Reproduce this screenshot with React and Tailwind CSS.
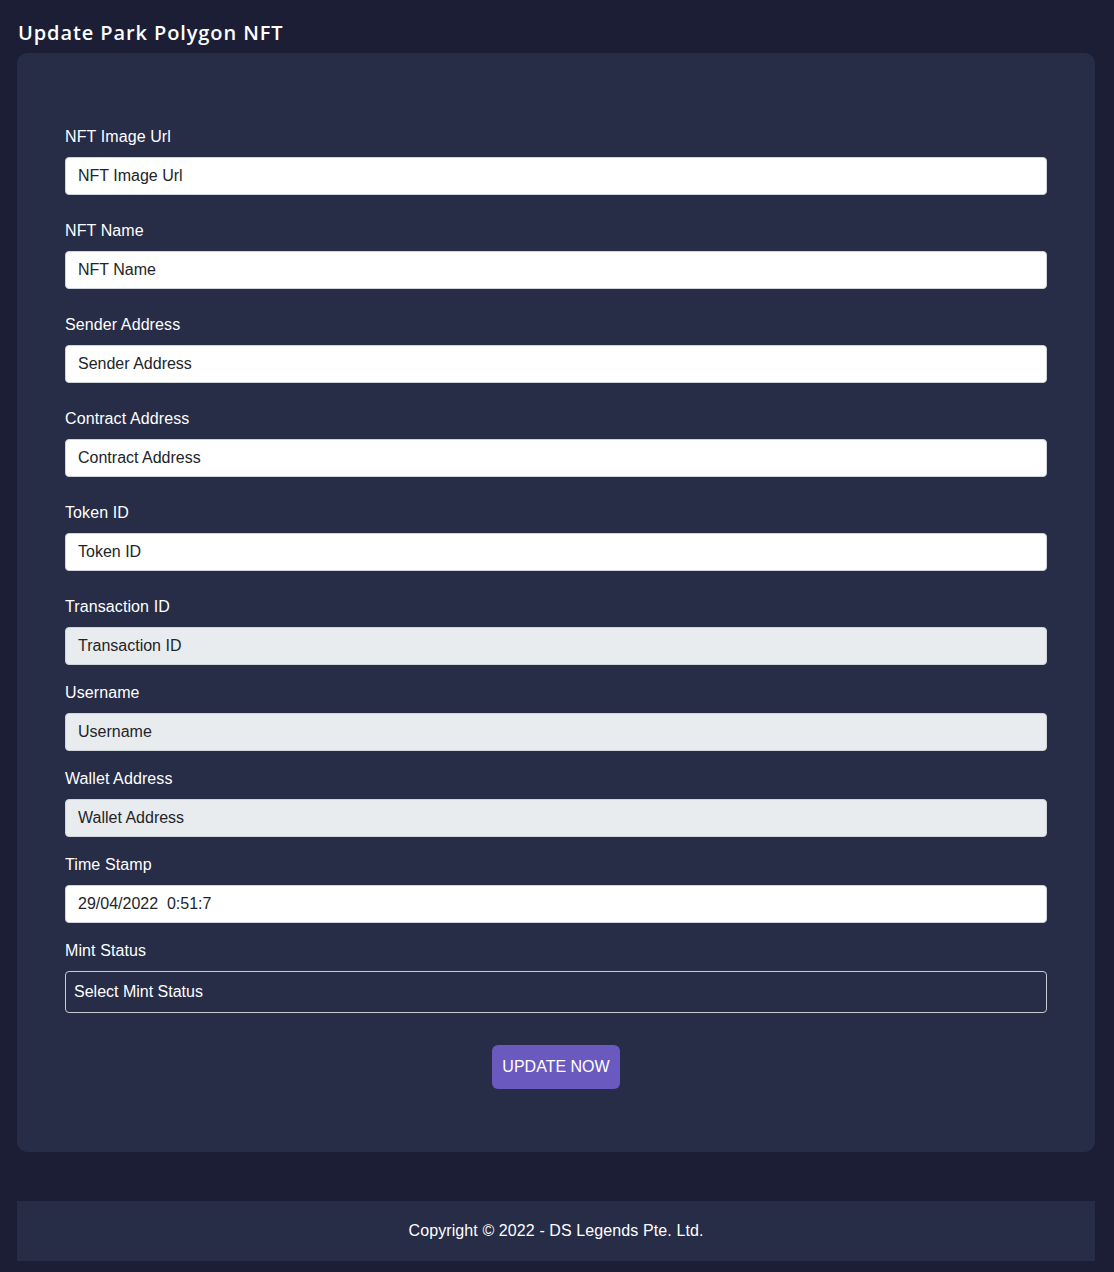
import React, { useState } from "react";

const fields = [
  { label: "NFT Image Url", name: "image_url", placeholder: "NFT Image Url" },
  { label: "NFT Name", name: "nft_name", placeholder: "NFT Name" },
  { label: "Sender Address", name: "sender", placeholder: "Sender Address" },
  { label: "Contract Address", name: "contract", placeholder: "Contract Address" },
  { label: "Token ID", name: "token_id", placeholder: "Token ID" },
  { label: "Transaction ID", name: "tx_id", placeholder: "Transaction ID", disabled: true },
  { label: "Username", name: "username", placeholder: "Username", disabled: true },
  { label: "Wallet Address", name: "wallet", placeholder: "Wallet Address", disabled: true },
  { label: "Time Stamp", name: "timestamp", tight: true },
];

const App = () => {
  const [formData, setFormData] = useState({ timestamp: "29/04/2022\u00a0\u00a00:51:7" });

  const onChange = (e) =>
    setFormData((prev) => ({ ...prev, [e.target.name]: e.target.value }));

  return (
    <div className="min-h-[1272px] bg-[#1b1e34] pl-[17px] pr-[19px] pt-[18px] pb-[11px] font-['Liberation_Sans',Arial,sans-serif]">
      <h1 className="pl-px text-[20px] leading-[30px] font-semibold tracking-[0.9px] text-white font-['Open_Sans',sans-serif]">
        Update Park Polygon NFT
      </h1>

      {/* Tarjeta principal */}
      <div className="mt-[5px] rounded-[10px] bg-[#272c47] px-[48px] pt-[71px] pb-[63px]">
        <form onSubmit={(e) => e.preventDefault()}>
          {fields.map((f) => (
            <div key={f.name} className={f.disabled || f.tight ? "mb-[15px]" : "mb-[23px]"}>
              <label
                htmlFor={f.name}
                className="block pt-px text-[16px] leading-[24px] tracking-[0.1px] text-white mb-[8px]"
              >
                {f.label}
              </label>
              <input
                id={f.name}
                name={f.name}
                type="text"
                value={formData[f.name] || ""}
                onChange={onChange}
                placeholder={f.placeholder}
                disabled={f.disabled}
                className={
                  "block h-[38px] w-full rounded-[4px] border border-[#ced4da] px-[12px] text-[16px] text-[#212529] placeholder:text-[#212529] outline-none " +
                  (f.disabled ? "bg-[#e9ecef]" : "bg-white")
                }
              />
            </div>
          ))}

          <div>
            <label
              htmlFor="mint_status"
              className="block pt-px text-[16px] leading-[24px] tracking-[0.1px] text-white mb-[8px]"
            >
              Mint Status
            </label>
            <select
              id="mint_status"
              name="mint_status"
              className="block h-[42px] w-full appearance-none rounded-[4px] border border-[#c9cbd3] bg-transparent px-[8px] text-[16px] text-white outline-none"
            >
              <option value="">Select Mint Status</option>
              <option value="minted">Minted</option>
              <option value="pending">Pending</option>
            </select>
          </div>

          <div className="mt-[32px] flex justify-center">
            <button
              type="submit"
              className="h-[44px] w-[128px] rounded-[6px] bg-[#6a5abf] text-[16px] text-white"
            >
              UPDATE NOW
            </button>
          </div>
        </form>
      </div>

      <footer className="mt-[49px] flex h-[60px] items-center justify-center bg-[#272c47] text-[16px] tracking-[0.1px] text-white">
        Copyright © 2022 - DS Legends Pte. Ltd.
      </footer>
    </div>
  );
};

export default App;
